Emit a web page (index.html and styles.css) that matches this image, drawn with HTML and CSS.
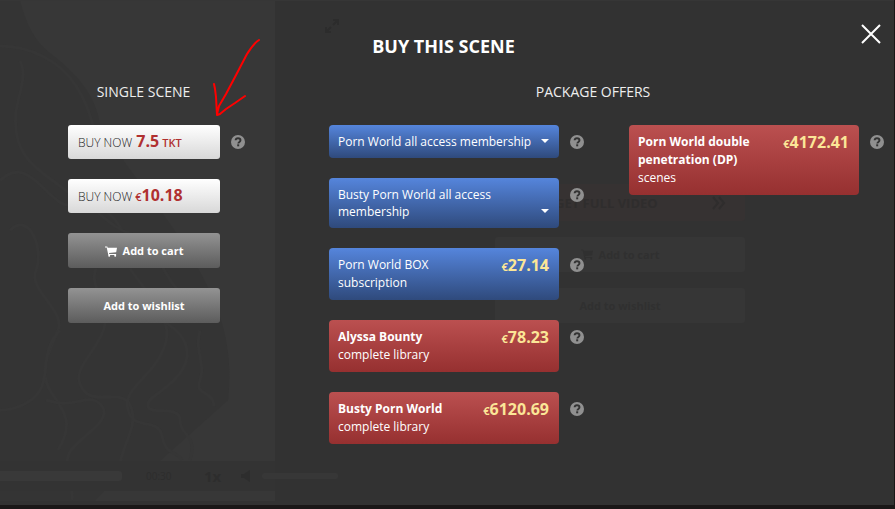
FILE: index.html
```html
<!DOCTYPE html>
<html lang="en">
<head>
<meta charset="UTF-8">
<meta name="viewport" content="width=device-width, initial-scale=1">
<title>Buy this scene</title>
<link rel="stylesheet" href="styles.css">
</head>
<body>
<svg class="sprite" aria-hidden="true">
  <symbol id="help" viewBox="0 0 14 14">
    <circle cx="7" cy="7" r="7" fill="#909090"/>
    <path d="M4.6 5.3C4.7 3.9 5.7 3.2 7 3.2c1.500 0 2.500.8 2.500 2.100C9.500 6.900 7.300 6.900 7.300 8.500" fill="none" stroke="#333" stroke-width="1.900"/>
    <rect x="6.200" y="9.300" width="2" height="2" fill="#333"/>
  </symbol>
  <symbol id="cart" viewBox="0 0 12 11">
    <path d="M0 .5h2.300l.4 1.200H12L11.200 6.300 4 7.100l.2.8h6.900v1H3.300L1.700 1.500H0z"/>
    <circle cx="4.200" cy="9.800" r="1"/>
    <circle cx="10.200" cy="9.800" r="1"/>
  </symbol>
</svg>

<!-- page behind the overlay -->
<div class="page" aria-hidden="true">
  <div class="player">
    <svg class="poster" viewBox="0 0 275 501" preserveAspectRatio="none">
      <path class="shade" d="M0 0h20c6 20 12 38 30 52 26 20 46 42 50 72 30 50 60 80 90 130 30 50 44 90 38 146L160 461 104 491 95 501H0z"/>
      <g class="waves">
        <path d="M0 45c30 0 60 15 76 40s20 50 22 70"/>
        <path d="M20 60c10 20-8 40-4 70s24 40 50 60 40 10 56 40"/>
        <path d="M0 180c30-30 50 30 72 24s30 20 60 30 30 50 54 60"/>
        <path d="M10 230c20-20 34 20 26 40s30 40 22 60-20 40-8 60 26 30 8 60"/>
        <path d="M96 268c-8 20 16 34 8 60s-34 40-22 60 44-4 50 22-20 40-10 80"/>
        <path d="M130 268c20 30 46 50 34 80s-42 40-36 62 30 6 34 26 14 14 20 24"/>
        <path d="M160 320c24 10 34 30 22 50s-36 26-34 36 32-2 32 14 18 14 10 40"/>
        <path d="M46 400c30 10 44-10 56 6s-30 34-34 50 6 30 4 44"/>
        <path d="M60 330c-20 20-10 44-20 60s-30 20-40 20M200 330c-6 20 6 34 0 50s14 10 14 26"/>
      </g>
    </svg>
    <div class="controls">
      <span class="progress"></span>
      <span class="time">00:30</span>
      <span class="speed">1x</span>
      <svg class="speaker" viewBox="0 0 10 12"><path d="M0 4h3l6-4v12L3 8H0z"/></svg>
      <span class="volume"></span>
    </div>
  </div>
  <div class="aside">
    <svg class="expand" viewBox="0 0 14 14"><path d="M8 1h5v5M13 1 8 6M6 13H1V8M1 13l5-5"/></svg>
    <div class="ghost-list">
      <div class="ghost ghost-video"><span>GET FULL VIDEO</span><svg viewBox="0 0 14 14"><path d="m1 1 5 6-5 6M7 1l5 6-5 6"/></svg></div>
      <div class="ghost"><svg class="ghost-cart"><use href="#cart"/></svg>Add to cart</div>
      <div class="ghost">Add to wishlist</div>
    </div>
  </div>
</div>

<div class="overlay" role="dialog" aria-labelledby="title">
  <button class="close" type="button" aria-label="Close">
    <svg viewBox="0 0 20 20"><path d="M1 1l18 18M19 1 1 19"/></svg>
  </button>
  <h1 id="title">BUY THIS SCENE</h1>

  <div class="columns">
    <section class="single">
      <h2>SINGLE SCENE</h2>
      <div class="list">
        <div class="row">
          <button class="btn btn-buy" type="button">BUY NOW<b> 7.5</b> <small>TKT</small></button>
          <a class="help" href="#" aria-label="Help"><svg><use href="#help"/></svg></a>
        </div>
        <button class="btn btn-buy" type="button">BUY NOW <small>€</small><b>10.18</b></button>
        <button class="btn btn-grey" type="button"><svg class="cart"><use href="#cart"/></svg>Add to cart</button>
        <button class="btn btn-grey" type="button">Add to wishlist</button>
      </div>
    </section>

    <section class="packages">
      <h2>PACKAGE OFFERS</h2>
      <div class="offers">
        <div class="list">
          <div class="row">
            <button class="offer blue dropdown" type="button" aria-haspopup="true"><span>Porn World all access membership</span><i class="caret"></i></button>
            <a class="help" href="#" aria-label="Help"><svg><use href="#help"/></svg></a>
          </div>
          <div class="row">
            <button class="offer blue dropdown" type="button" aria-haspopup="true"><span>Busty Porn World all access membership</span><i class="caret"></i></button>
            <a class="help" href="#" aria-label="Help"><svg><use href="#help"/></svg></a>
          </div>
          <div class="row">
            <button class="offer blue" type="button"><span class="name">Porn World BOX subscription</span><span class="price"><small>€</small>27.14</span></button>
            <a class="help" href="#" aria-label="Help"><svg><use href="#help"/></svg></a>
          </div>
          <div class="row">
            <button class="offer red" type="button"><span class="name"><b>Alyssa Bounty</b> complete library</span><span class="price"><small>€</small>78.23</span></button>
            <a class="help" href="#" aria-label="Help"><svg><use href="#help"/></svg></a>
          </div>
          <div class="row">
            <button class="offer red" type="button"><span class="name"><b>Busty Porn World</b> complete library</span><span class="price"><small>€</small>6120.69</span></button>
            <a class="help" href="#" aria-label="Help"><svg><use href="#help"/></svg></a>
          </div>
        </div>
        <div class="list">
          <div class="row">
            <button class="offer red" type="button"><span class="name"><b>Porn World double penetration (DP)</b> scenes</span><span class="price"><small>€</small>4172.41</span></button>
            <a class="help" href="#" aria-label="Help"><svg><use href="#help"/></svg></a>
          </div>
        </div>
      </div>
    </section>
  </div>

  <!-- hand-drawn pointer to the ticket price -->
  <svg class="arrow" viewBox="0 0 50 80" aria-hidden="true">
    <path d="M47 2C42 5 39 10 35 16L23 39 14 56 7 68 5 76M2 46l1 5 1 8 1 18 3-1 6-5 9-6 10-7"/>
  </svg>
</div>
</body>
</html>
```

FILE: styles.css
```css
* { box-sizing: border-box; }
body { margin: 0; padding: 0 1px 4px 0; background: #1a1717; font: 12px/18px "Open Sans", "Noto Sans", sans-serif; color: #fff; position: relative; }
h1, h2 { margin: 0; text-align: center; }
button { font: inherit; color: inherit; border: 0; cursor: pointer; }
.sprite { position: absolute; width: 0; height: 0; }

/* page behind */
.page { display: flex; min-height: calc(100vh - 4px); background: #323232; border-top: 1px solid #363636; }
.player { width: 275px; display: grid; align-content: end; background: #373737; position: relative; margin-bottom: 4px; }
.poster { position: absolute; inset: 0; width: 100%; height: 100%; }
.shade { fill: #343434; }
.waves { fill: none; stroke: #363636; stroke-width: 3; }
.controls { position: relative; display: flex; align-items: center; width: 338px; height: 30px; margin-bottom: 10px; background: linear-gradient(to right, #333 275px, transparent 275px); color: #2d2d2d; }
.progress { width: 122px; height: 10px; border-radius: 0 3px 3px 0; background: #393939; }
.time { margin-left: 24px; width: 58px; font-size: 10px; }
.speed { width: 37px; font-size: 15px; font-weight: bold; }
.speaker { width: 10px; height: 12px; fill: #2d2d2d; }
.volume { flex: 1; margin-left: 11px; height: 6px; border-radius: 2px; background: #373737; }
.aside { flex: 1; padding: 18px 0 0 50px; }
.expand { display: block; width: 14px; height: 14px; fill: none; stroke: #2c2c2c; stroke-width: 2; }
.ghost-list { display: grid; gap: 16px; width: 250px; margin: 151px 0 0 170px; }
.ghost { display: flex; align-items: center; justify-content: center; height: 35px; border-radius: 3px; background: #363636; color: #303030; font-size: 11px; font-weight: bold; }
.ghost-video { height: 37px; background: #363232; color: #2f2d2d; font-size: 13px; justify-content: space-between; padding: 0 19px 0 60px; }
.ghost-video svg { width: 14px; height: 14px; fill: none; stroke: #2f2d2d; stroke-width: 2; }
.ghost-cart { width: 12px; height: 11px; margin-right: 6px; fill: #303030; }

/* dialog */
.overlay { position: absolute; top: 0; left: 0; right: 0; padding: 34px 8px 0 0; }
.close { position: absolute; top: 24px; right: 14px; width: 20px; height: 20px; padding: 0; background: none; }
.close svg { display: block; width: 20px; height: 20px; stroke: #fff; stroke-width: 2; }
h1 { font-size: 18px; line-height: 24px; font-weight: bold; }
h2 { font-size: 14px; line-height: 20px; font-weight: normal; color: #eee; }
.columns { display: grid; grid-template-columns: 287px 1fr; gap: 12px; margin-top: 24px; }
.list { display: grid; gap: 20px; align-content: start; }
.single .list { margin-top: 23px; padding-left: 68px; }
.offers { display: grid; grid-template-columns: 270px 1fr; gap: 30px; margin-top: 23px; padding-left: 30px; }
.row { display: flex; align-items: flex-start; gap: 11px; }
.help { display: block; margin-top: 10px; }
.help svg { display: block; width: 14px; height: 14px; }

.btn { width: 152px; height: 34px; padding: 0 10px; border-radius: 3px; }
.btn-buy { text-align: left; background: linear-gradient(#fff, #d8d8d8); color: #222; font-weight: 300; }
.btn-buy b { font-size: 16px; font-weight: bold; color: #b03030; }
.btn-buy small { font-size: 11px; font-weight: 600; color: #b03030; }
.btn-grey { height: 35px; background: linear-gradient(#939393, #5c5c5c); font-size: 11px; font-weight: bold; }
.cart { width: 12px; height: 11px; margin-right: 6px; vertical-align: -2px; fill: #fff; }

.offer { display: flex; justify-content: space-between; align-items: flex-start; width: 230px; padding: 8px 10px 8px 9px; border-radius: 4px; text-align: left; }
.blue { background: linear-gradient(#5585dc, #2f4a7c); }
.red { background: linear-gradient(#bb5050, #963030); }
.name { width: 120px; }
.name b { display: block; }
.price { font-size: 16px; font-weight: bold; color: #fbe697; }
.price small { font-size: 11px; }
.dropdown { align-items: flex-end; line-height: 17px; }
.caret { margin-bottom: 7px; border: 4px solid transparent; border-top-color: #fff; border-bottom: 0; }

.arrow { position: absolute; top: 38px; left: 212px; width: 50px; height: 80px; fill: none; stroke: #f00; stroke-width: 2; stroke-linecap: round; stroke-linejoin: round; pointer-events: none; }
```
